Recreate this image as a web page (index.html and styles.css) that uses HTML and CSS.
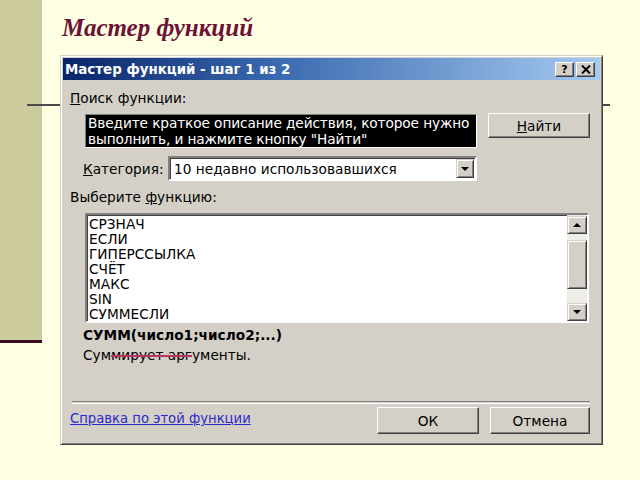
FILE: index.html
```html
<!DOCTYPE html>
<html lang="ru">
<head>
<meta charset="utf-8">
<title>Мастер функций</title>
<link rel="stylesheet" href="styles.css">
</head>
<body>
<div class="slide">
  <div class="band"></div>
  <div class="rule"></div>
  <main class="content">
    <h1 class="slide-title">Мастер функций</h1>
    <section class="dialog">
      <header class="titlebar">
        <span class="titlebar-text">Мастер функций - шаг 1 из 2</span>
        <span class="tb-buttons">
          <span class="tb-btn tb-help">?</span>
          <span class="tb-btn"><svg width="10" height="9" viewBox="0 0 10 9"><path d="M1 0.5 L9 8.5 M9 0.5 L1 8.5" stroke="#000" stroke-width="2" fill="none"/></svg></span>
        </span>
      </header>
      <div class="dialog-body">
        <div class="label"><u>П</u>оиск функции:</div>
        <div class="search-row">
          <div class="search-box">Введите краткое описание действия, которое нужно<br>выполнить, и нажмите кнопку "Найти"</div>
          <div class="btn btn-find"><u>Н</u>айти</div>
        </div>
        <div class="category-row">
          <span class="category-label"><u>К</u>атегория:</span>
          <div class="select">
            <span class="select-text">10 недавно использовавшихся</span>
            <span class="arrow-btn"><span class="tri-down"></span></span>
          </div>
        </div>
        <div class="label label-list">Выберите <u>ф</u>ункцию:</div>
        <div class="listbox">
          <ul class="items">
            <li>СРЗНАЧ</li>
            <li>ЕСЛИ</li>
            <li>ГИПЕРССЫЛКА</li>
            <li>СЧЁТ</li>
            <li>МАКС</li>
            <li>SIN</li>
            <li>СУММЕСЛИ</li>
          </ul>
          <div class="scrollbar">
            <span class="arrow-btn sb-btn"><span class="tri-up"></span></span>
            <span class="sb-thumb"></span>
            <span class="sb-track"></span>
            <span class="arrow-btn sb-btn"><span class="tri-down"></span></span>
          </div>
        </div>
        <div class="syntax">СУММ(число1;число2;...)</div>
        <div class="desc">Сум<span class="strike">мирует арг</span>ументы.</div>
        <div class="separator"></div>
        <div class="bottom-row">
          <a class="help-link" href="#">Справка по этой функции</a>
          <div class="actions">
            <div class="btn btn-ok">ОК</div>
            <div class="btn btn-cancel">Отмена</div>
          </div>
        </div>
      </div>
    </section>
  </main>
</div>
</body>
</html>
```
FILE: styles.css
```css
html, body {
  margin: 0;
  padding: 0;
}
body {
  background: #ffffe4;
  width: 640px;
  height: 480px;
  overflow: hidden;
}
.slide {
  position: relative;
  display: flex;
  align-items: flex-start;
  height: 480px;
}
.band {
  width: 42px;
  height: 340px;
  background: #cbcb9d;
  border-bottom: 3px solid #3a0b24;
  flex: none;
}
.rule {
  position: absolute;
  left: 27px;
  top: 104px;
  width: 583px;
  height: 2px;
  background: #4a4a4a;
}
.content {
  padding-left: 18px;
}
.slide-title {
  margin: 0 0 13px 2px;
  padding-top: 14px;
  font-family: "Liberation Serif", serif;
  font-style: italic;
  font-weight: bold;
  font-size: 25px;
  line-height: 28px;
  color: #6c1236;
}
.dialog {
  position: relative;
  width: 543px;
  box-sizing: border-box;
  background: #d4d0c8;
  border: 1px solid;
  border-color: #d4d0c8 #404040 #404040 #d4d0c8;
  box-shadow: inset 1px 1px #ffffff, inset -1px -1px #808080;
  padding: 2px;
  font-family: "DejaVu Sans", sans-serif;
  font-size: 13.7px;
  color: #000;
}
.titlebar {
  height: 22px;
  display: flex;
  align-items: center;
  justify-content: space-between;
  padding: 0 5px 0 2px;
  background: linear-gradient(to right, #0a246a 0%, #3a6ab0 40%, #a6caf0 100%);
}
.titlebar-text {
  color: #fff;
  font-weight: bold;
  font-size: 13.4px;
}
.tb-buttons {
  display: flex;
  gap: 2px;
}
.tb-btn {
  width: 19px;
  height: 15px;
  box-sizing: border-box;
  background: #d4d0c8;
  border: 1px solid;
  border-color: #fff #404040 #404040 #fff;
  box-shadow: inset -1px -1px #808080;
  display: flex;
  align-items: center;
  justify-content: center;
  font-weight: bold;
  font-size: 11px;
  line-height: 1;
}
.dialog-body {
  padding: 0 10px 8px 7px;
  display: flex;
  flex-direction: column;
}
.label {
  margin-top: 10px;
  line-height: 16px;
}
.label-list {
  margin-top: 8px;
}
.search-row {
  margin-top: 8px;
  margin-left: 15px;
  display: flex;
  justify-content: space-between;
  align-items: flex-start;
}
.search-box {
  width: 392px;
  height: 34px;
  box-sizing: border-box;
  background: #000;
  color: #fff;
  line-height: 16px;
  padding: 0 0 0 2px;
  white-space: nowrap;
  overflow: hidden;
  letter-spacing: -0.1px;
  border: 1px solid;
  border-color: #808080 #ffffff #ffffff #808080;
}
.btn {
  height: 25px;
  box-sizing: border-box;
  background: #d4d0c8;
  border: 1px solid;
  border-color: #ffffff #404040 #404040 #ffffff;
  box-shadow: inset -1px -1px #808080;
  display: flex;
  align-items: center;
  justify-content: center;
}
.btn-find {
  width: 102px;
  margin-top: -1px;
}
.category-row {
  margin-top: 8px;
  margin-left: 13px;
  display: flex;
  align-items: center;
}
.category-label {
  width: 85px;
}
.select {
  width: 309px;
  height: 25px;
  box-sizing: border-box;
  background: #fff;
  border: 2px solid;
  border-color: #808080 #ffffff #ffffff #808080;
  box-shadow: inset 1px 1px #404040;
  display: flex;
  align-items: center;
  justify-content: space-between;
  padding: 0 1px 0 4px;
}
.arrow-btn {
  width: 18px;
  height: 19px;
  box-sizing: border-box;
  background: #d4d0c8;
  border: 1px solid;
  border-color: #d4d0c8 #404040 #404040 #d4d0c8;
  box-shadow: inset 1px 1px #ffffff, inset -1px -1px #808080;
  display: flex;
  align-items: center;
  justify-content: center;
}
.tri-down {
  width: 0;
  height: 0;
  border-left: 4px solid transparent;
  border-right: 4px solid transparent;
  border-top: 4px solid #000;
}
.tri-up {
  width: 0;
  height: 0;
  border-left: 4px solid transparent;
  border-right: 4px solid transparent;
  border-bottom: 4px solid #000;
}
.listbox {
  margin-top: 8px;
  margin-left: 15px;
  width: 504px;
  height: 110px;
  box-sizing: border-box;
  background: #fff;
  border: 2px solid;
  border-color: #808080 #ffffff #ffffff #808080;
  box-shadow: inset 1px 1px #404040;
  display: flex;
  justify-content: space-between;
}
.items {
  list-style: none;
  margin: 0;
  padding: 2px 0 0 2px;
}
.items li {
  line-height: 15px;
  height: 15px;
}
.scrollbar {
  width: 20px;
  display: flex;
  flex-direction: column;
  background: #eeede8;
  padding: 1px 0 0 0;
}
.sb-btn {
  width: 20px;
  height: 18px;
}
.sb-thumb {
  margin-top: 6px;
  height: 49px;
  box-sizing: border-box;
  background: #d4d0c8;
  border: 1px solid;
  border-color: #d4d0c8 #404040 #404040 #d4d0c8;
  box-shadow: inset 1px 1px #ffffff, inset -1px -1px #808080;
}
.sb-track {
  flex: 1;
}
.syntax {
  margin-top: 4px;
  margin-left: 13px;
  line-height: 16px;
  font-weight: bold;
}
.desc {
  margin-top: 4px;
  margin-left: 13px;
  line-height: 16px;
}
.strike {
  text-decoration: line-through;
  text-decoration-color: #b8335e;
  text-decoration-thickness: 2px;
}
.separator {
  margin-top: 38px;
  margin-left: 2px;
  height: 1px;
  border-top: 1px solid #808080;
  border-bottom: 1px solid #ffffff;
}
.bottom-row {
  margin-top: 3px;
  margin-left: 0;
  display: flex;
  justify-content: space-between;
  align-items: center;
}
.help-link {
  color: #2a2ac8;
  font-size: 13.2px;
  text-decoration: underline;
  margin-top: -4px;
}
.actions {
  display: flex;
  gap: 11px;
}
.btn-ok {
  width: 102px;
  height: 27px;
}
.btn-cancel {
  width: 100px;
  height: 27px;
}
```
